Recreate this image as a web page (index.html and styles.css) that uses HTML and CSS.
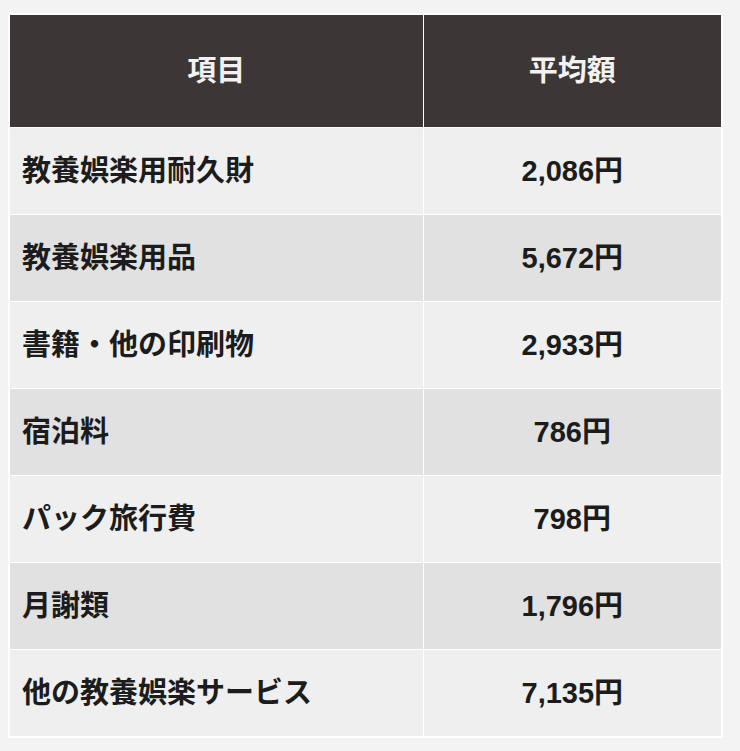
FILE: index.html
```html
<!DOCTYPE html>
<html lang="ja">
<head>
<meta charset="utf-8">
<link rel="stylesheet" href="styles.css">
</head>
<body>
<table class="tbl">
  <thead>
    <tr><th class="c1">項目</th><th class="c2">平均額</th></tr>
  </thead>
  <tbody>
    <tr class="odd"><td class="name">教養娯楽用耐久財</td><td class="val">2,086円</td></tr>
    <tr class="even"><td class="name">教養娯楽用品</td><td class="val">5,672円</td></tr>
    <tr class="odd"><td class="name">書籍・他の印刷物</td><td class="val">2,933円</td></tr>
    <tr class="even"><td class="name">宿泊料</td><td class="val">786円</td></tr>
    <tr class="odd"><td class="name">パック旅行費</td><td class="val">798円</td></tr>
    <tr class="even"><td class="name">月謝類</td><td class="val">1,796円</td></tr>
    <tr class="odd"><td class="name">他の教養娯楽サービス</td><td class="val">7,135円</td></tr>
  </tbody>
</table>
</body>
</html>
```
FILE: styles.css
```css
html, body {
  margin: 0;
  padding: 0;
  background: #f3f3f3;
}
body {
  padding: 13px 0 0 8px;
  font-family: "Liberation Sans", "Noto Sans CJK JP", sans-serif;
  font-weight: 700;
  color: #1c1c1c;
}
.tbl {
  border-collapse: separate;
  border-spacing: 1px;
  background: #ffffff;
  border: 1px solid #ffffff;
  width: 715px;
  table-layout: fixed;
}
.tbl th, .tbl td {
  padding: 0;
  font-size: 29px;
  line-height: 1;
}
.tbl th {
  background: #3c3736;
  color: #f2f2f2;
  height: 112px;
  text-align: center;
  font-weight: 700;
}
.c1 { width: 412px; }
.c2 { width: 297px; }
.tbl td {
  height: 86px;
}
.odd td { background: #efefef; }
.even td { background: #e1e1e1; }
.name {
  text-align: left;
  padding-left: 12px !important;
}
.val {
  text-align: center;
}
```
